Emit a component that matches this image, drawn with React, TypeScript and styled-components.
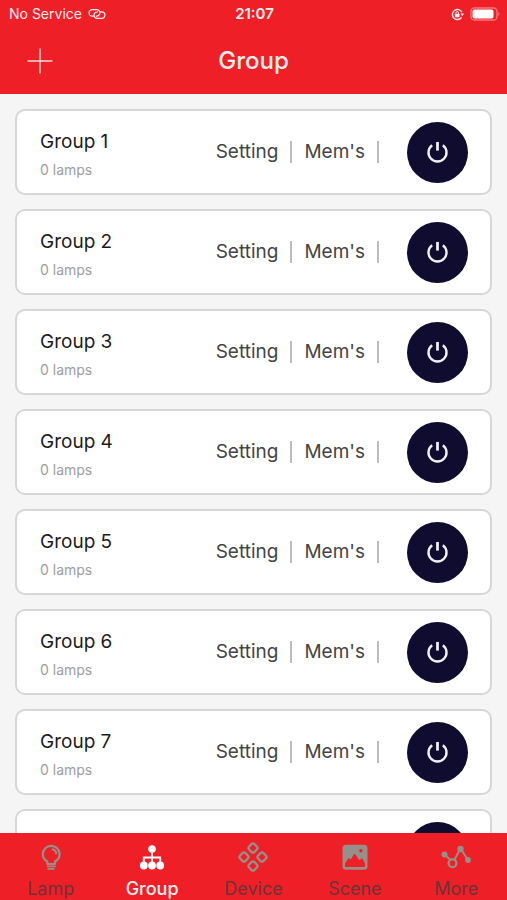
import React, { useState } from "react";
import styled, { createGlobalStyle } from "styled-components";

const RED = "#ef1f27";

const GlobalStyle = createGlobalStyle`
  * { box-sizing: border-box; }
  body { margin: 0; font-family: Inter, "Liberation Sans", sans-serif; background: #f5f5f5; }
  button { font-family: inherit; border: 0; padding: 0; margin: 0; background: none; color: inherit; cursor: pointer; }
  h1, h2, p, ul { margin: 0; padding: 0; font-weight: 400; }
  svg { display: block; }
`;

const Screen = styled.div`
  height: 100vh;
  display: flex;
  flex-direction: column;
`;

const Header = styled.header`
  flex: none;
  background: ${RED};
  color: #fff0ef;
`;

const StatusBar = styled.div`
  display: grid;
  grid-template-columns: 1fr auto 1fr;
  align-items: center;
  height: 28px;
  padding: 0 7px 0 9px;
  font-size: 14px;
  line-height: 20px;
`;

const StatusGroup = styled.div<{ $end?: boolean }>`
  display: flex;
  align-items: center;
  justify-content: ${(p) => (p.$end ? "flex-end" : "flex-start")};
  gap: 6px;
`;

const Clock = styled.time`
  font-size: 15px;
  font-weight: 600;
`;

const TitleBar = styled.div`
  display: grid;
  grid-template-columns: 1fr auto 1fr;
  align-items: center;
  height: 66px;
  padding: 0 27px;
`;

const AddButton = styled.button`
  justify-self: start;
`;

const Title = styled.h1`
  font-size: 24px;
  line-height: 32px;
  font-weight: 500;
`;

const List = styled.ul`
  flex: 1;
  min-height: 0;
  overflow-y: auto;
  scrollbar-width: none;
  display: flex;
  flex-direction: column;
  gap: 14px;
  padding: 15px;
  list-style: none;
`;

const Card = styled.li`
  flex: none;
  display: flex;
  align-items: center;
  height: 86px;
  padding: 0 22px 0 23px;
  background: #fff;
  border: 2px solid #d6d6d6;
  border-radius: 10px;
`;

const Info = styled.div`
  flex: 1;
  display: flex;
  flex-direction: column;
  gap: 6px;
  padding-top: 6px;
`;

const GroupName = styled.h2`
  font-size: 19px;
  line-height: 24px;
  color: #1c1c1c;
`;

const LampCount = styled.p`
  font-size: 14px;
  line-height: 20px;
  color: #9d9d9d;
`;

const Actions = styled.div`
  display: flex;
  align-items: center;
`;

const ActionButton = styled.button`
  font-size: 19px;
  line-height: 24px;
  color: #444;
`;

const Divider = styled.span`
  width: 2px;
  height: 22px;
  margin: 0 12px;
  background: #bdbdbd;
`;

const PowerButton = styled.button`
  display: flex;
  align-items: center;
  justify-content: center;
  width: 61px;
  height: 61px;
  margin-left: 16px;
  border-radius: 50%;
  background: #100c30;
  color: #f1f0f6;
`;

const TabBar = styled.nav`
  flex: none;
  display: grid;
  grid-template-columns: repeat(5, 1fr);
  height: 67px;
  background: ${RED};
`;

const Tab = styled.button<{ $active: boolean }>`
  display: flex;
  flex-direction: column;
  align-items: center;
  gap: 6px;
  padding-top: 9px;
  color: ${(p) => (p.$active ? "#fff" : "#959088")};
`;

const TabLabel = styled.span<{ $active: boolean }>`
  font-size: 18px;
  line-height: 22px;
  font-weight: ${(p) => (p.$active ? 500 : 400)};
  color: ${(p) => (p.$active ? "#fff0ef" : "#6b3437")};
`;

const LinkIcon = () => (
  <svg width="18" height="12" viewBox="0 0 18 12" fill="none" stroke="currentColor" strokeWidth="1.3" strokeLinecap="round">
    <path d="M5.500 8.200H4.400A3.300 3.300 0 0 1 4.400 1.600H8.600A3.300 3.300 0 0 1 11.600 6.400C11 7.500 9.800 8.200 8.600 8.200" />
    <path d="M12.500 3.800h1.100a3.300 3.300 0 0 1 0 6.600H9.400A3.300 3.300 0 0 1 6.400 5.600C7 4.500 8.200 3.800 9.400 3.800" />
  </svg>
);

const RotationLockIcon = () => (
  <svg width="13" height="13" viewBox="0 0 13 13" fill="none" stroke="currentColor">
    <path d="M10.900 4.300A5 5 0 1 0 10.600 9.300" strokeWidth="1.400" />
    <path d="M9.400 5.600h3.600l-1.800 2.600z" fill="currentColor" stroke="none" />
    <rect x="3.900" y="5.700" width="4.600" height="3.600" rx=".5" fill="currentColor" stroke="none" />
    <path d="M4.900 6V4.900a1.300 1.300 0 0 1 2.600 0V6" />
  </svg>
);

const BatteryIcon = () => (
  <svg width="30" height="14" viewBox="0 0 30 14">
    <rect x="1" y="1" width="26" height="12" rx="3.500" fill="none" stroke="#f7797c" strokeWidth="1.300" />
    <rect x="2.500" y="2.500" width="21" height="9" rx="2" fill="#fff" />
    <path d="M28.300 5v4c1.600-.6 1.600-3.400 0-4z" fill="#f7797c" />
  </svg>
);

const PlusIcon = () => (
  <svg width="26" height="26" viewBox="0 0 26 26" stroke="#ffd9d8" strokeWidth="1.500">
    <path d="M13 .5v25M.5 13h25" />
  </svg>
);

const PowerIcon = () => (
  <svg width="23" height="23" viewBox="0 0 24 24" fill="none" stroke="currentColor" strokeWidth="2.500">
    <path d="M6.400 4.400a9.400 9.400 0 1 0 11.200 0" />
    <path d="M12 1v9" strokeWidth="2.900" />
  </svg>
);

const LampIcon = () => (
  <svg width="30" height="30" viewBox="0 0 30 30" fill="none" stroke="currentColor" strokeWidth="2.200">
    <path d="M11.300 22v-2.600C8.500 18 6.800 15.500 6.800 12.200a8.400 8.400 0 0 1 16.800 0c0 3.300-1.800 5.800-4.600 7.200V22z" strokeLinejoin="round" />
    <path d="M15.800 7.300a5 5 0 0 1 4.500 4.800" strokeWidth="2" />
    <path d="M11 24.400h8.600M11.500 26.900h7" strokeWidth="1.700" />
  </svg>
);

const GroupIcon = () => (
  <svg width="30" height="30" viewBox="0 0 30 30" fill="currentColor">
    <circle cx="15" cy="7" r="3.800" />
    <circle cx="6.800" cy="23.500" r="3.900" />
    <circle cx="15" cy="23.500" r="3.900" />
    <circle cx="23.200" cy="23.500" r="3.900" />
    <path d="M15 8v14M6.800 21v-5.500h16.400V21" fill="none" stroke="currentColor" strokeWidth="1.900" />
  </svg>
);

const DeviceIcon = () => (
  <svg width="30" height="30" viewBox="0 0 30 30" fill="none" stroke="currentColor" strokeWidth="2.300">
    <rect x="11.200" y="2.200" width="7.600" height="7.600" rx="2.200" transform="rotate(45 15 6)" />
    <rect x="2.200" y="11.200" width="7.600" height="7.600" rx="2.200" transform="rotate(45 6 15)" />
    <rect x="20.200" y="11.200" width="7.600" height="7.600" rx="2.200" transform="rotate(45 24 15)" />
    <rect x="11.200" y="20.200" width="7.600" height="7.600" rx="2.200" transform="rotate(45 15 24)" />
  </svg>
);

const SceneIcon = () => (
  <svg width="30" height="30" viewBox="0 0 30 30">
    <rect x="2.500" y="2.700" width="25" height="25" rx="3.500" fill="currentColor" />
    <path
      d="M5 25v-3.500l3-4.700q.6-.9 1.400-.2l1.400 1 3-5q.9-1.200 1.700 0l3.800 5.700 2-1.500q.9-.5 1.400.3L25 21.500V25z"
      fill={RED}
    />
    <circle cx="20.800" cy="8.800" r="1.700" fill={RED} />
  </svg>
);

const MoreIcon = () => (
  <svg width="30" height="30" viewBox="0 0 30 30" fill="currentColor">
    <path d="M3.500 12.500l6.500 6M13 18.500l6.500-12M19.500 6.500l7.500 11.500" stroke="currentColor" strokeWidth="2" />
    <circle cx="3.500" cy="12.500" r="3" />
    <circle cx="19.500" cy="7" r="3.200" />
    <circle cx="27" cy="18" r="2.900" />
    <circle cx="11.500" cy="21.300" r="3.900" fill={RED} stroke="currentColor" strokeWidth="2.200" />
  </svg>
);

const groups = Array.from({ length: 8 }, (_, i) => `Group ${i + 1}`);

const tabs = [
  { label: "Lamp", Icon: LampIcon },
  { label: "Group", Icon: GroupIcon },
  { label: "Device", Icon: DeviceIcon },
  { label: "Scene", Icon: SceneIcon },
  { label: "More", Icon: MoreIcon },
];

export default function App() {
  const [active, setActive] = useState("Group");
  return (
    <Screen>
      <GlobalStyle />
      <Header>
        <StatusBar>
          <StatusGroup>
            <span>No Service</span>
            <LinkIcon />
          </StatusGroup>
          <Clock>21:07</Clock>
          <StatusGroup $end>
            <RotationLockIcon />
            <BatteryIcon />
          </StatusGroup>
        </StatusBar>
        <TitleBar>
          <AddButton aria-label="Add group">
            <PlusIcon />
          </AddButton>
          <Title>Group</Title>
        </TitleBar>
      </Header>
      <List>
        {groups.map((name) => (
          <Card key={name}>
            <Info>
              <GroupName>{name}</GroupName>
              <LampCount>0 lamps</LampCount>
            </Info>
            <Actions>
              <ActionButton>Setting</ActionButton>
              <Divider />
              <ActionButton>Mem's</ActionButton>
              <Divider />
              <PowerButton aria-label={`Power ${name}`}>
                <PowerIcon />
              </PowerButton>
            </Actions>
          </Card>
        ))}
      </List>
      <TabBar>
        {tabs.map(({ label, Icon }) => (
          <Tab key={label} $active={label === active} onClick={() => setActive(label)}>
            <Icon />
            <TabLabel $active={label === active}>{label}</TabLabel>
          </Tab>
        ))}
      </TabBar>
    </Screen>
  );
}
